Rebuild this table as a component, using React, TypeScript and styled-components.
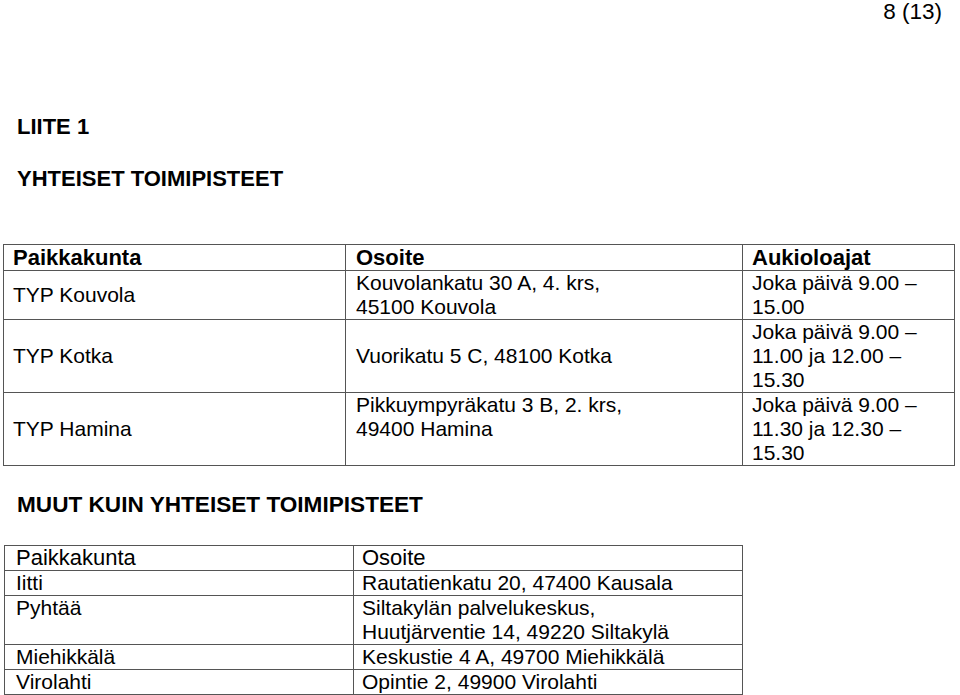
import React from 'react'
import styled, { createGlobalStyle } from 'styled-components'

const Global = createGlobalStyle`
  html, body {
    margin: 0;
    background: #fff;
  }
  body {
    font-family: "Liberation Sans", Arial, sans-serif;
    color: #000;
  }
`

const Page = styled.div`
  width: 960px;
  box-sizing: border-box;
  padding: 0 5px 0 3px;
  display: flex;
  flex-direction: column;
`

const PageNo = styled.div`
  align-self: flex-end;
  margin-right: 13px;
  font-size: 22.5px;
  line-height: 24px;
`

const Heading = styled.h2<{ $top: number; $size?: number }>`
  margin: ${p => p.$top}px 0 0 14px;
  font-size: ${p => p.$size ?? 22}px;
  line-height: 25px;
  font-weight: 700;
`

const Table = styled.div<{ $cols: string; $top: number; $left?: number }>`
  display: grid;
  grid-template-columns: ${p => p.$cols};
  gap: 1px;
  padding: 1px;
  background: #555;
  align-self: flex-start;
  margin: ${p => p.$top}px 0 0 ${p => p.$left || 0}px;
`

const Cell = styled.div<{ $valign?: 'center' | 'top'; $pad?: number }>`
  background: #fff;
  padding: 0 ${p => p.$pad ?? 9}px;
  font-size: 21px;
  line-height: 24px;
  display: flex;
  flex-direction: column;
  justify-content: ${p => (p.$valign === 'top' ? 'flex-start' : 'center')};
`

const HeadCell = styled(Cell)<{ $bold?: boolean }>`
  font-size: 22px;
  line-height: ${p => (p.$bold ? 25 : 24)}px;
  font-weight: ${p => (p.$bold ? 700 : 400)};
`

const offices = [
  {
    place: 'TYP Kouvola',
    address: ['Kouvolankatu 30 A, 4. krs,', '45100 Kouvola'],
    hours: ['Joka päivä 9.00 –', '15.00'],
    addrTop: false,
  },
  {
    place: 'TYP Kotka',
    address: ['Vuorikatu 5 C, 48100 Kotka'],
    hours: ['Joka päivä 9.00 –', '11.00 ja 12.00 –', '15.30'],
    addrTop: false,
  },
  {
    place: 'TYP Hamina',
    address: ['Pikkuympyräkatu 3 B, 2. krs,', '49400 Hamina'],
    hours: ['Joka päivä 9.00 –', '11.30 ja 12.30 –', '15.30'],
    addrTop: true,
  },
]

const others = [
  { place: 'Iitti', address: ['Rautatienkatu 20, 47400 Kausala'] },
  { place: 'Pyhtää', address: ['Siltakylän palvelukeskus,', 'Huutjärventie 14, 49220 Siltakylä'] },
  { place: 'Miehikkälä', address: ['Keskustie 4 A, 49700 Miehikkälä'] },
  { place: 'Virolahti', address: ['Opintie 2, 49900 Virolahti'] },
]

const Lines = ({ lines }: { lines: string[] }) => (
  <>
    {lines.map((l, i) => (
      <span key={i}>{l}</span>
    ))}
  </>
)

export default function App() {
  return (
    <Page>
      <Global />
      <PageNo>8 (13)</PageNo>
      <Heading $top={90}>LIITE 1</Heading>
      <Heading $top={27}>YHTEISET TOIMIPISTEET</Heading>

      <Table $cols="341px 396px 211px" $top={53}>
        <HeadCell $bold>Paikkakunta</HeadCell>
        <HeadCell $bold $pad={10}>Osoite</HeadCell>
        <HeadCell $bold>Aukioloajat</HeadCell>
        {offices.map(o => (
          <React.Fragment key={o.place}>
            <Cell>{o.place}</Cell>
            <Cell $pad={10} $valign={o.addrTop ? 'top' : 'center'}>
              <Lines lines={o.address} />
            </Cell>
            <Cell $valign="top">
              <Lines lines={o.hours} />
            </Cell>
          </React.Fragment>
        ))}
      </Table>

      <Heading $top={26} $size={22.6}>MUUT KUIN YHTEISET TOIMIPISTEET</Heading>

      <Table $cols="348px 388px" $top={28} $left={1}>
        <HeadCell $pad={11}>Paikkakunta</HeadCell>
        <HeadCell $pad={8}>Osoite</HeadCell>
        {others.map(o => (
          <React.Fragment key={o.place}>
            <Cell $pad={11} $valign="top">{o.place}</Cell>
            <Cell $pad={8}>
              <Lines lines={o.address} />
            </Cell>
          </React.Fragment>
        ))}
      </Table>
    </Page>
  )
}
